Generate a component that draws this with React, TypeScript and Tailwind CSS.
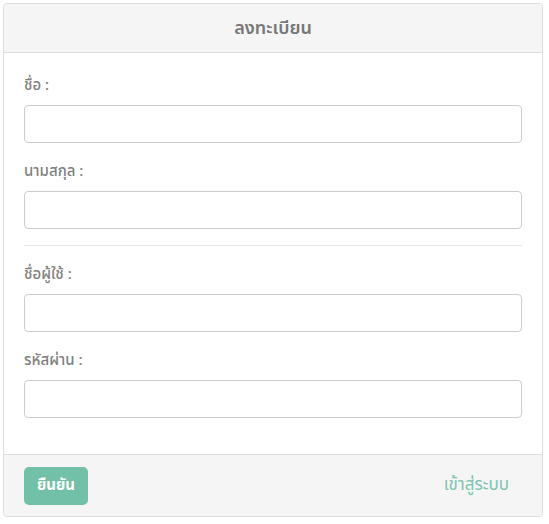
export default function App() {
  const font = { fontFamily: '"Noto Sans Thai", "Liberation Sans", "Noto Sans", sans-serif' };
  return (
    <div className="w-[549px] h-[524px] bg-white pt-[3px] pl-[3px]" style={font}>
      <div className="w-[540px] rounded-[4px] border border-[#dddddd] overflow-hidden">
        {/* header */}
        <div className="h-[49px] bg-[#f5f5f5] border-b border-[#dddddd] flex items-center justify-center">
          <h1 className="text-[18px] font-semibold text-[#777777]">ลงทะเบียน</h1>
        </div>

        {/* body */}
        <div className="bg-white px-[20px] pt-[22px] pb-[36px]">
          <Field label="ชื่อ :" />
          <div className="h-[18px]" />
          <Field label="นามสกุล :" />
          <div className="mt-[16px] mb-[18px] border-t border-[#e5e5e5]" />
          <Field label="ชื่อผู้ใช้ :" />
          <div className="h-[18px]" />
          <Field label="รหัสผ่าน :" type="password" />
        </div>

        {/* footer */}
        <div className="bg-[#f5f5f5] border-t border-[#dddddd] px-[20px] pt-[12px] pb-[11px] flex items-center justify-between">
          <button className="h-[38px] px-[13px] rounded-[5px] bg-[#72c0a8] text-white text-[15px] font-bold">
            ยืนยัน
          </button>
          <a href="#" className="mr-[13px] text-[17px] text-[#7cc4b0]">
            เข้าสู่ระบบ
          </a>
        </div>
      </div>
    </div>
  );
}

function Field({ label, type = "text" }: { label: string; type?: string }) {
  return (
    <div>
      <label className="block h-[22px] leading-[22px] mb-[8px] text-[15px] font-medium text-[#808080]">
        {label}
      </label>
      <input
        type={type}
        className="block w-full h-[38px] rounded-[4px] border border-[#cccccc] bg-white px-3 outline-none"
      />
    </div>
  );
}
